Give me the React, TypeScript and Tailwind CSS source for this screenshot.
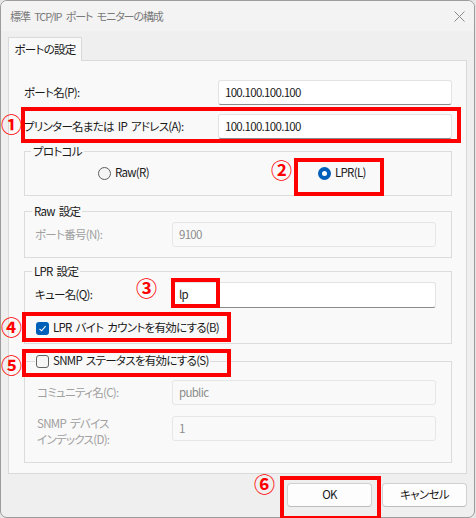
import React from "react";

const Field = ({ value, disabled, w = "w-[234px]", h = "h-[25px]" }: { value: string; disabled?: boolean; w?: string; h?: string }) => (
  <div
    className={`${w} ${h} flex items-center pl-[6px] rounded-[3px] border ${
      disabled
        ? "bg-[#f9f9f9] border-[#e6e6e6] text-[#8c8c8c]"
        : "bg-white border-[#e3e3e3] border-b-[#8a8a8a] text-[#1a1a1a]"
    }`}
  >
    {value}
  </div>
);

const Check = ({ checked }: { checked?: boolean }) =>
  checked ? (
    <span className="w-[13px] h-[13px] rounded-[3px] bg-[#005fb8] flex items-center justify-center shrink-0">
      <svg width="9" height="9" viewBox="0 0 9 9">
        <path d="M1.5 4.8 L3.6 6.8 L7.6 2.2" fill="none" stroke="white" strokeWidth="1.1" />
      </svg>
    </span>
  ) : (
    <span className="w-[13px] h-[13px] rounded-[3px] border border-[#626262] bg-[#f6f6f6] shrink-0" />
  );

const Num = ({ n, cls }: { n: string; cls: string }) => (
  <div className={`absolute ${cls} text-[21px] leading-none font-bold tracking-normal text-[#ff0000]`}>{n}</div>
);

const Box = ({ cls }: { cls: string }) => <div className={`absolute ${cls} border-[4px] border-[#ff0000]`} />;

export default function App() {
  return (
    <div className="w-[476px] h-[518px] relative bg-[#e6e6e6] overflow-hidden font-['Noto_Sans_CJK_JP','Noto_Sans',sans-serif] [font-feature-settings:'palt'] text-[#1a1a1a] text-[11.5px] tracking-[-0.7px] [word-spacing:2px]">
      <div className="w-[475px] h-[518px] rounded-[7px] border border-[#9c9c9c] bg-[#efefef] flex flex-col overflow-hidden">
        {/* Title bar */}
        <div className="h-[30px] bg-[#f3f3f3] flex items-center justify-between pl-[9px] pr-[9px] shrink-0">
          <span className="text-[11px] tracking-[-1.1px] [word-spacing:3px] text-[#7a7a7a] pt-[1px]">標準 TCP/IP ポート モニターの構成</span>
          <svg width="11" height="11" viewBox="0 0 11 11" className="mt-[1px]">
            <path d="M0.5 0.5 L10.5 10.5 M10.5 0.5 L0.5 10.5" stroke="#8a8a8a" strokeWidth="1" />
          </svg>
        </div>
        {/* Body */}
        <div className="flex-1 px-[7px] flex flex-col">
          <div className="mt-[6px] flex">
            <div className="relative z-10 -mb-px h-[24px] w-[74px] border border-b-0 border-[#d9d9d9] bg-[#f9f9f9] flex items-center justify-center">
              ポートの設定
            </div>
          </div>
          <div className="h-[414px] border border-[#d9d9d9] bg-[#f9f9f9] pl-[15px] pr-[14px] pt-[19px]">
            <div className="flex items-center justify-between">
              <span>ポート名(P):</span>
              <Field value="100.100.100.100" />
            </div>
            <div className="flex items-center justify-between mt-[9px]">
              <span>プリンター名または IP アドレス(A):</span>
              <Field value="100.100.100.100" />
            </div>

            {/* Protocol */}
            <fieldset className="mt-[4px] border border-[#dcdcdc]">
              <legend className="ml-[6px] px-[2px] h-[16px] leading-[16px]">プロトコル</legend>
              <div className="grid grid-cols-[220px_1fr] pl-[73px] pt-[6px] pb-[14px] h-[36px]">
                <div className="flex items-center gap-[4px] h-[16px]">
                  <span className="w-[13px] h-[13px] rounded-full border border-[#5f5f5f] bg-[#f5f5f5]" />
                  <span>Raw(R)</span>
                </div>
                <div className="flex items-center gap-[4px] h-[16px]">
                  <span className="w-[13px] h-[13px] rounded-full bg-[#005fb8] flex items-center justify-center">
                    <span className="w-[5px] h-[5px] rounded-full bg-white" />
                  </span>
                  <span>LPR(L)</span>
                </div>
              </div>
            </fieldset>

            {/* Raw */}
            <fieldset className="mt-[7px] border border-[#dcdcdc]">
              <legend className="ml-[7px] px-[2px] h-[16px] leading-[16px]">Raw 設定</legend>
              <div className="flex items-center justify-between pl-[10px] pr-[15px] pt-[3px] pb-[10px]">
                <span className="text-[#a0a0a0]">ポート番号(N):</span>
                <Field value="9100" disabled w="w-[264px]" />
              </div>
            </fieldset>

            {/* LPR */}
            <fieldset className="mt-[5px] border border-[#dcdcdc]">
              <legend className="ml-[7px] px-[2px] h-[16px] leading-[16px]">LPR 設定</legend>
              <div className="pl-[10px] pr-[15px] pt-[3px] pb-[7px]">
                <div className="flex items-center justify-between">
                  <span>キュー名(Q):</span>
                  <Field value="lp" w="w-[264px]" h="h-[26px]" />
                </div>
                <div className="flex items-center gap-[4px] mt-[12px] ml-[1px] h-[16px]">
                  <Check checked />
                  <span>LPR バイト カウントを有効にする(B)</span>
                </div>
              </div>
            </fieldset>

            {/* SNMP */}
            <fieldset className="mt-[9px] border border-[#dcdcdc]">
              <legend className="ml-[10px] px-[1px] h-[16px]">
                <div className="flex items-center gap-[4px] h-[16px]">
                  <Check />
                  <span>SNMP ステータスを有効にする(S)</span>
                </div>
              </legend>
              <div className="pl-[12px] pr-[15px] pt-[11px] pb-[15px] text-[#a0a0a0]">
                <div className="flex items-center justify-between">
                  <span>コミュニティ名(C):</span>
                  <Field value="public" disabled w="w-[264px]" />
                </div>
                <div className="flex items-start justify-between mt-[11px]">
                  <span className="leading-[16px] -mt-[1px]">
                    SNMP デバイス
                    <br />
                    インデックス(D):
                  </span>
                  <Field value="1" disabled w="w-[264px]" />
                </div>
              </div>
            </fieldset>
          </div>

          <div className="mt-[9px] flex justify-end gap-[10px]">
            <button className="w-[85px] h-[24px] rounded-[4px] border border-[#d0d0d0] border-b-[#bdbdbd] bg-[#fdfdfd]">OK</button>
            <button className="w-[85px] h-[24px] rounded-[4px] border border-[#d0d0d0] border-b-[#bdbdbd] bg-[#fdfdfd]">キャンセル</button>
          </div>
        </div>
      </div>

      {/* Annotations */}
      <Box cls="left-[21px] top-[107px] w-[440px] h-[36px]" />
      <Box cls="left-[294px] top-[158px] w-[90px] h-[38px]" />
      <Box cls="left-[171px] top-[278px] w-[49px] h-[30px]" />
      <Box cls="left-[22px] top-[312px] w-[209px] h-[30px]" />
      <Box cls="left-[22px] top-[349px] w-[209px] h-[28px]" />
      <Box cls="left-[280px] top-[476px] w-[101px] h-[44px]" />
      <Num n="①" cls="left-[1px] top-[113px]" />
      <Num n="②" cls="left-[271px] top-[159px]" />
      <Num n="③" cls="left-[136px] top-[277px]" />
      <Num n="④" cls="left-[1px] top-[316px]" />
      <Num n="⑤" cls="left-[1px] top-[354px]" />
      <Num n="⑥" cls="left-[254px] top-[473px]" />
    </div>
  );
}
